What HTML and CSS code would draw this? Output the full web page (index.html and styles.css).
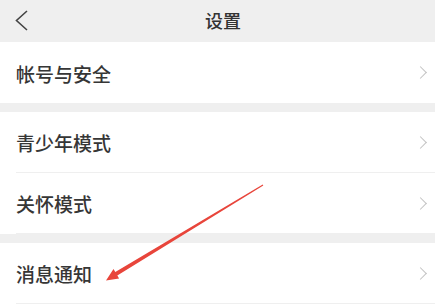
FILE: index.html
```html
<!DOCTYPE html>
<html lang="zh-CN">
<head>
  <meta charset="UTF-8" />
  <meta name="viewport" content="width=device-width, initial-scale=1" />
  <title>设置</title>
  <link rel="stylesheet" href="styles.css">
</head>
<body>
  <div class="page">
    <header class="topbar">
      <span class="back">
        <svg width="14" height="22" viewBox="0 0 14 22"><polyline points="12,1 1.5,10.5 12,20" /></svg>
      </span>
      <h1>设置</h1>
    </header>

    <section class="group">
      <div class="cell"><span>帐号与安全</span><i class="arrow"></i></div>
    </section>

    <section class="group">
      <div class="cell"><span>青少年模式</span><i class="arrow"></i></div>
      <div class="cell"><span>关怀模式</span><i class="arrow"></i></div>
    </section>

    <section class="group">
      <div class="cell"><span>消息通知</span><i class="arrow"></i></div>
    </section>

    <!-- 标注箭头 -->
    <svg class="mark" width="435" height="304" viewBox="0 0 435 304">
      <polygon points="263.3,185.4 117.3,275.5 119.1,278.5 106,280.5 113.5,269.1 115.3,272.1 262.7,184.6" />
    </svg>
  </div>
</body>
</html>
```

FILE: styles.css
```css
body {
  margin: 0;
  background: #efefef;
  font-family: "Noto Sans CJK SC", "Noto Sans", sans-serif;
  color: #333;
}

.page {
  position: relative;
  width: 435px;
  height: 304px;
  overflow: hidden;
}

.topbar {
  height: 42px;
  display: flex;
  align-items: center;
  padding-left: 15px;
  background: #efefef;
}

.back {
  display: flex;
  width: 14px;
}

.back svg polyline {
  fill: none;
  stroke: #444;
  stroke-width: 1.6;
}

.topbar h1 {
  flex: 1;
  margin: 0 0 2px;
  padding-right: 18px;
  text-align: center;
  font-size: 18px;
  font-weight: 500;
  color: #333;
}

.group {
  background: #fff;
  margin-bottom: 9px;
}

.cell {
  height: 61px;
  margin-left: 16px;
  padding-right: 8px;
  display: flex;
  align-items: center;
  justify-content: space-between;
  border-bottom: 1px solid #efefef;
  box-sizing: border-box;
  font-size: 19px;
  font-weight: 500;
  color: #363636;
}

.cell span {
  margin-top: 1px;
}

.cell .arrow {
  width: 8px;
  height: 8px;
  border-top: 1.5px solid #c2c2c2;
  border-right: 1.5px solid #c2c2c2;
  transform: rotate(45deg);
  margin-right: 2px;
}

.group:first-of-type .cell {
  border-bottom: none;
}

.mark {
  position: absolute;
  left: 0;
  top: 0;
}

.mark polygon {
  fill: #e8453b;
}
```
